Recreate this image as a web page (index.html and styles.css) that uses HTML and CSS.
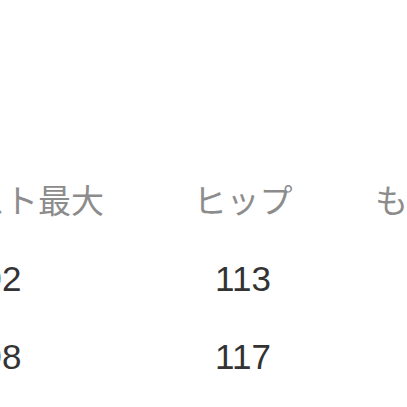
FILE: index.html
```html
<!DOCTYPE html>
<html lang="ja">
<head>
<meta charset="utf-8">
<link rel="stylesheet" href="styles.css">
</head>
<body>
<div class="table">
  <div class="row head">
    <div class="cell c1">ウエスト最大</div>
    <div class="cell c2">ヒップ</div>
    <div class="cell c3">もも周り</div>
  </div>
  <div class="row">
    <div class="cell c1">92</div>
    <div class="cell c2">113</div>
    <div class="cell c3">64</div>
  </div>
  <div class="row">
    <div class="cell c1">98</div>
    <div class="cell c2">117</div>
    <div class="cell c3">66</div>
  </div>
</div>
</body>
</html>
```
FILE: styles.css
```css
html, body {
  margin: 0;
  padding: 0;
  background: #fff;
  overflow: hidden;
}
body {
  width: 407px;
  height: 407px;
  font-family: "Liberation Sans", "Noto Sans CJK JP", sans-serif;
}
.table {
  margin-left: -134px;
  padding-top: 174px;
  display: flex;
  flex-direction: column;
}
.row {
  display: grid;
  grid-template-columns: 272px 210px 186px;
  height: 78px;
  align-items: center;
  font-size: 35px;
  color: #333;
}
.row.head {
  height: 50px;
  margin-bottom: 16px;
  font-family: "Noto Sans CJK JP", sans-serif;
  font-size: 33px;
  color: #8c8c8c;
}
.head .c1 {
  padding-left: 6px;
}
.cell {
  text-align: center;
  white-space: nowrap;
}
```
